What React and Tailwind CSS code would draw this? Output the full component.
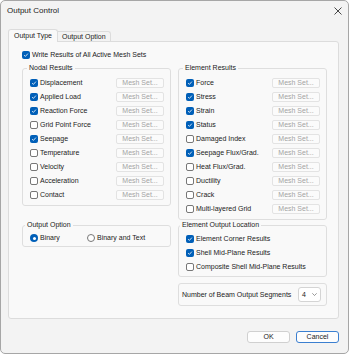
import React from "react";

const Check = ({ on }) => (
    <span
        className={`w-[8px] h-[8px] rounded-[2px] flex items-center justify-center shrink-0 ${
            on ? "bg-[#005fb8]" : "bg-white border border-[#777777]"
        }`}
    >
        {on && (
            <svg width="6" height="6" viewBox="0 0 6 6">
                <path d="M1.1 3.1 L2.4 4.4 L4.9 1.6" stroke="white" strokeWidth="0.8" fill="none" />
            </svg>
        )}
    </span>
);

const Radio = ({ on }) =>
    on ? (
        <span className="w-[8px] h-[8px] rounded-full bg-[#005fb8] flex items-center justify-center shrink-0">
            <span className="w-[3px] h-[3px] rounded-full bg-white" />
        </span>
    ) : (
        <span className="w-[8px] h-[8px] rounded-full border border-[#777777] bg-white shrink-0" />
    );

const MeshButton = () => (
    <span className="ml-auto w-[48px] h-[10px] rounded-[2px] border border-[#e3e3e3] bg-[#fbfbfb] text-[#a3a3a3] flex items-center justify-center leading-[8px]">
        Mesh Set...
    </span>
);

const Row = ({ label, on, mesh = true }) => (
    <div className="h-[14px] flex items-center">
        <Check on={on} />
        <span className="ml-[2px]">{label}</span>
        {mesh && <MeshButton />}
    </div>
);

const nodal = [
    ["Displacement", true],
    ["Applied Load", true],
    ["Reaction Force", true],
    ["Grid Point Force", false],
    ["Seepage", true],
    ["Temperature", false],
    ["Velocity", false],
    ["Acceleration", false],
    ["Contact", false],
];

const element = [
    ["Force", true],
    ["Stress", true],
    ["Strain", true],
    ["Status", true],
    ["Damaged Index", false],
    ["Seepage Flux/Grad.", true],
    ["Heat Flux/Grad.", false],
    ["Ductility", false],
    ["Crack", false],
    ["Multi-layered Grid", false],
];

export default function App() {
    return (
        <div className="w-[349px] h-[354px] bg-[#f3f3f3] border border-[#a6a6a6] rounded-[5px] flex flex-col overflow-hidden font-['Liberation_Sans',Arial,sans-serif] text-[7px] leading-[10px] text-[#1b1b1b]">
            {/* Title bar */}
            <div className="h-[20px] flex items-center justify-between pl-[6px] pr-[6px] shrink-0">
                <span className="text-[8px]">Output Control</span>
                <svg width="8" height="8" viewBox="0 0 8 8">
                    <path d="M0.5 0.5 L7.5 7.5 M7.5 0.5 L0.5 7.5" stroke="#333" strokeWidth="0.9" />
                </svg>
            </div>

            {/* Tabs */}
            <div className="flex ml-[7px] mt-[8px] h-[12px] shrink-0">
                <div className="relative z-10 h-[13px] px-[5px] flex items-center border border-b-0 border-[#dcdcdc] bg-[#f9f9f9] rounded-t-[3px]">
                    Output Type
                </div>
                <div className="mt-[2px] h-[10px] px-[4px] flex items-center border border-l-0 border-b-0 border-[#dcdcdc] bg-[#f3f3f3] rounded-tr-[3px]">
                    Output Option
                </div>
            </div>

            {/* Panel */}
            <div className="ml-[7px] w-[331px] h-[278px] shrink-0 border border-[#dcdcdc] bg-[#f9f9f9] rounded-[3px] rounded-tl-none pt-[6px] pl-[13px]">
                <div className="h-[14px] flex items-center">
                    <Check on />
                    <span className="ml-[2px]">Write Results of All Active Mesh Sets</span>
                </div>

                <div className="flex gap-[7px] mt-[1px]">
                    {/* Left column */}
                    <div className="w-[149px] flex flex-col">
                        <fieldset className="border border-[#dedede] rounded-[3px] pl-[7px] pr-[6px] pt-[3px] pb-[3px]">
                            <legend className="px-[2px] ml-[-3px] leading-[10px]">Nodal Results</legend>
                            {nodal.map(([label, on]) => (
                                <Row key={label} label={label} on={on} />
                            ))}
                        </fieldset>

                        <fieldset className="mt-[14px] border border-[#dedede] rounded-[3px] pl-[7px] pr-[6px] pt-[1px] pb-[1px]">
                            <legend className="px-[2px] ml-[-5px] leading-[10px]">Output Option</legend>
                            <div className="h-[14px] flex items-center">
                                <Radio on />
                                <span className="ml-[2px] w-[47px]">Binary</span>
                                <Radio />
                                <span className="ml-[2px]">Binary and Text</span>
                            </div>
                        </fieldset>
                    </div>

                    {/* Right column */}
                    <div className="w-[149px] flex flex-col">
                        <fieldset className="border border-[#dedede] rounded-[3px] pl-[7px] pr-[6px] pt-[3px] pb-[3px]">
                            <legend className="px-[2px] ml-[-3px] leading-[10px]">Element Results</legend>
                            {element.map(([label, on]) => (
                                <Row key={label} label={label} on={on} />
                            ))}
                        </fieldset>

                        <fieldset className="border border-[#dedede] rounded-[3px] pl-[7px] pr-[6px] pt-[2px] pb-[2px]">
                            <legend className="px-[2px] ml-[-6px] leading-[10px]">Element Output Location</legend>
                            <Row label="Element Corner Results" on mesh={false} />
                            <Row label="Shell Mid-Plane Results" on mesh={false} />
                            <Row label="Composite Shell Mid-Plane Results" on={false} mesh={false} />
                        </fieldset>

                        <div className="mt-[6px] h-[23px] border border-[#dedede] rounded-[3px] pl-[3px] pr-[5px] flex items-center justify-between">
                            <span>Number of Beam Output Segments</span>
                            <div className="w-[23px] h-[15px] bg-white border border-[#d4d4d4] rounded-[3px] flex items-center justify-between pl-[3px] pr-[3px]">
                                <span>4</span>
                                <svg width="5" height="3" viewBox="0 0 5 3">
                                    <path d="M0.3 0.3 L2.5 2.5 L4.7 0.3" stroke="#555" strokeWidth="0.6" fill="none" />
                                </svg>
                            </div>
                        </div>
                    </div>
                </div>
            </div>

            {/* Buttons */}
            <div className="flex justify-end gap-[6px] pr-[9px] mt-[12px]">
                <button className="w-[43px] h-[12px] bg-[#fdfdfd] border border-[#d0d0d0] rounded-[3px] flex items-center justify-center leading-[10px]">
                    OK
                </button>
                <button className="w-[43px] h-[12px] bg-[#fdfdfd] border border-[#3b7fd0] rounded-[3px] flex items-center justify-center leading-[10px]">
                    Cancel
                </button>
            </div>
        </div>
    );
}
